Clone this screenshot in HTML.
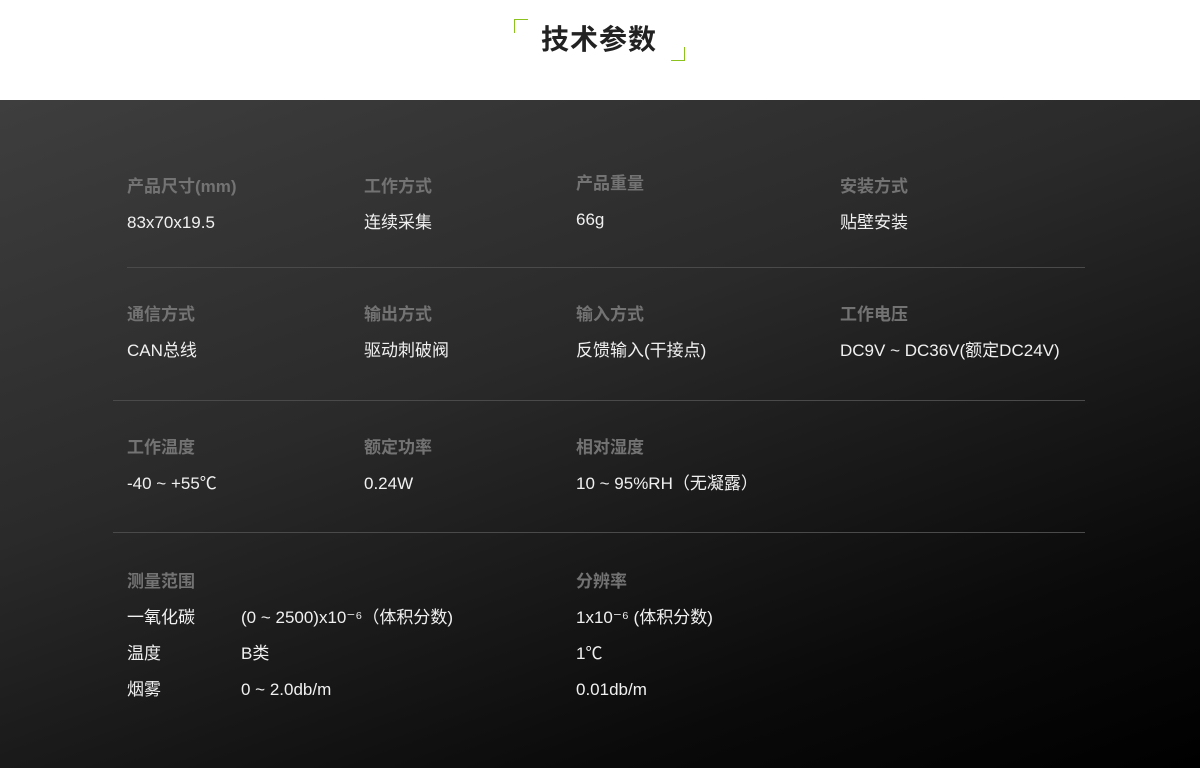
<!DOCTYPE html>
<html><head><meta charset="utf-8"><style>
*{margin:0;padding:0;box-sizing:border-box}
body{width:1200px;height:768px;overflow:hidden;background:#fff;font-family:"Liberation Sans","Noto Sans CJK SC",sans-serif;position:relative}
.title{position:absolute;left:0;top:0;width:1200px;height:100px;background:#fff}
.title h1{position:absolute;left:541px;top:22px;font-size:28px;font-weight:bold;color:#222;letter-spacing:1px;line-height:36px}
.c1{position:absolute;left:514px;top:19px;width:14px;height:14px;border-left:1px solid #8cc21e;border-top:1px solid #8cc21e}
.c2{position:absolute;left:671px;top:47px;width:14px;height:14px;border-right:1px solid #8cc21e;border-bottom:1px solid #8cc21e}
.dark{position:absolute;left:0;top:100px;width:1200px;height:668px;background:linear-gradient(160deg,#3e3e3e 0%,#2a2a2a 40%,#0a0a0a 80%,#000 100%)}
.t{position:absolute;font-size:17px;line-height:20px;white-space:nowrap;margin-top:1px}
.l{color:#737373;font-weight:bold}
.v{color:#f0f0f0}
.hr{position:absolute;height:1px;background:#4a4a4a}
</style></head><body>
<div class="title"><div class="c1"></div><h1>技术参数</h1><div class="c2"></div></div>
<div class="dark"></div>
<div class="t l" style="left:127px;top:176px">产品尺寸(mm)</div>
<div class="t l" style="left:364px;top:176px">工作方式</div>
<div class="t l" style="left:576px;top:173px">产品重量</div>
<div class="t l" style="left:840px;top:176px">安装方式</div>
<div class="t v" style="left:127px;top:212px">83x70x19.5</div>
<div class="t v" style="left:364px;top:212px">连续采集</div>
<div class="t v" style="left:576px;top:209px">66g</div>
<div class="t v" style="left:840px;top:212px">贴壁安装</div>
<div class="hr" style="left:127px;top:267px;width:958px"></div>
<div class="t l" style="left:127px;top:304px">通信方式</div>
<div class="t l" style="left:364px;top:304px">输出方式</div>
<div class="t l" style="left:576px;top:304px">输入方式</div>
<div class="t l" style="left:840px;top:304px">工作电压</div>
<div class="t v" style="left:127px;top:340px">CAN总线</div>
<div class="t v" style="left:364px;top:340px">驱动刺破阀</div>
<div class="t v" style="left:576px;top:340px">反馈输入(干接点)</div>
<div class="t v" style="left:840px;top:340px">DC9V ~ DC36V(额定DC24V)</div>
<div class="hr" style="left:113px;top:400px;width:972px"></div>
<div class="t l" style="left:127px;top:437px">工作温度</div>
<div class="t l" style="left:364px;top:437px">额定功率</div>
<div class="t l" style="left:576px;top:437px">相对湿度</div>
<div class="t v" style="left:127px;top:473px">-40 ~ +55℃</div>
<div class="t v" style="left:364px;top:473px">0.24W</div>
<div class="t v" style="left:576px;top:473px">10 ~ 95%RH（无凝露）</div>
<div class="hr" style="left:113px;top:532px;width:972px"></div>
<div class="t l" style="left:127px;top:571px">测量范围</div>
<div class="t l" style="left:576px;top:571px">分辨率</div>
<div class="t v" style="left:127px;top:607px">一氧化碳</div>
<div class="t v" style="left:241px;top:607px">(0 ~ 2500)x10⁻⁶（体积分数)</div>
<div class="t v" style="left:576px;top:607px">1x10⁻⁶ (体积分数)</div>
<div class="t v" style="left:127px;top:643px">温度</div>
<div class="t v" style="left:241px;top:643px">B类</div>
<div class="t v" style="left:576px;top:643px">1℃</div>
<div class="t v" style="left:127px;top:679px">烟雾</div>
<div class="t v" style="left:241px;top:679px">0 ~ 2.0db/m</div>
<div class="t v" style="left:576px;top:679px">0.01db/m</div>
</body></html>
